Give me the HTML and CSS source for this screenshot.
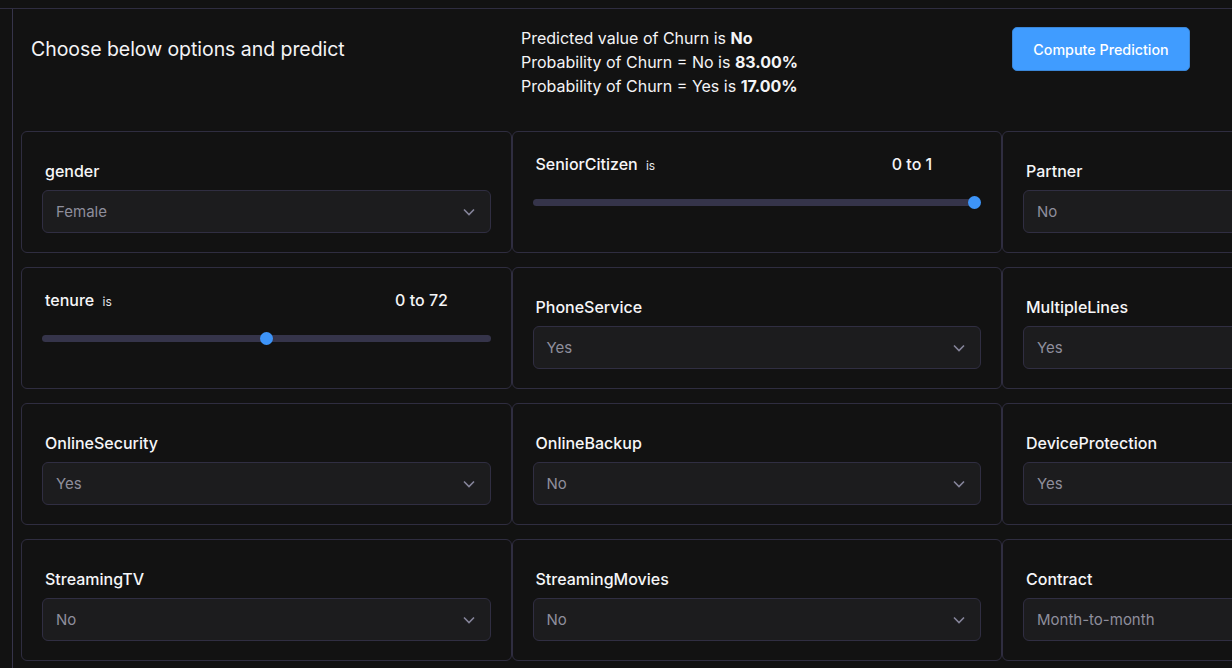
FILE: index.html
```html
<!DOCTYPE html>
<html lang="en">
<head>
<meta charset="UTF-8" />
<meta name="viewport" content="width=device-width, initial-scale=1" />
<title>Churn prediction</title>
<link rel="stylesheet" href="styles.css">
</head>
<body>

<div class="topbar"></div>

<div class="layout">
  <div class="rail"></div>
  <main class="main">

    <div class="header">
      <h2 class="title">Choose below options and predict</h2>
      <div class="prediction">
        <p>Predicted value of Churn is <strong>No</strong></p>
        <p>Probability of Churn = No is <strong>83.00%</strong></p>
        <p>Probability of Churn = Yes is <strong>17.00%</strong></p>
      </div>
      <div>
        <button class="btn">Compute Prediction</button>
      </div>
    </div>

    <div class="grid">
      <div class="card">
        <label class="field-label">gender</label>
        <div class="select"><span>Female</span><svg class="chev" viewBox="0 0 12 8"><path d="M1 1.5 6 6.5 11 1.5"/></svg></div>
      </div>
      <div class="card slider-card">
        <div class="slider-head">
          <span class="field-label">SeniorCitizen <small>is</small></span>
          <span class="range">0 to 1</span>
        </div>
        <div class="track track-short"><span class="thumb" style="left: 100%"></span></div>
      </div>
      <div class="card">
        <label class="field-label">Partner</label>
        <div class="select"><span>No</span><svg class="chev" viewBox="0 0 12 8"><path d="M1 1.5 6 6.5 11 1.5"/></svg></div>
      </div>

      <div class="card slider-card">
        <div class="slider-head">
          <span class="field-label">tenure <small>is</small></span>
          <span class="range">0 to 72</span>
        </div>
        <div class="track"><span class="thumb" style="left: 50%"></span></div>
      </div>
      <div class="card">
        <label class="field-label">PhoneService</label>
        <div class="select"><span>Yes</span><svg class="chev" viewBox="0 0 12 8"><path d="M1 1.5 6 6.5 11 1.5"/></svg></div>
      </div>
      <div class="card">
        <label class="field-label">MultipleLines</label>
        <div class="select"><span>Yes</span><svg class="chev" viewBox="0 0 12 8"><path d="M1 1.5 6 6.5 11 1.5"/></svg></div>
      </div>

      <div class="card">
        <label class="field-label">OnlineSecurity</label>
        <div class="select"><span>Yes</span><svg class="chev" viewBox="0 0 12 8"><path d="M1 1.5 6 6.5 11 1.5"/></svg></div>
      </div>
      <div class="card">
        <label class="field-label">OnlineBackup</label>
        <div class="select"><span>No</span><svg class="chev" viewBox="0 0 12 8"><path d="M1 1.5 6 6.5 11 1.5"/></svg></div>
      </div>
      <div class="card">
        <label class="field-label">DeviceProtection</label>
        <div class="select"><span>Yes</span><svg class="chev" viewBox="0 0 12 8"><path d="M1 1.5 6 6.5 11 1.5"/></svg></div>
      </div>

      <div class="card">
        <label class="field-label">StreamingTV</label>
        <div class="select"><span>No</span><svg class="chev" viewBox="0 0 12 8"><path d="M1 1.5 6 6.5 11 1.5"/></svg></div>
      </div>
      <div class="card">
        <label class="field-label">StreamingMovies</label>
        <div class="select"><span>No</span><svg class="chev" viewBox="0 0 12 8"><path d="M1 1.5 6 6.5 11 1.5"/></svg></div>
      </div>
      <div class="card">
        <label class="field-label">Contract</label>
        <div class="select"><span>Month-to-month</span><svg class="chev" viewBox="0 0 12 8"><path d="M1 1.5 6 6.5 11 1.5"/></svg></div>
      </div>
    </div>

  </main>
</div>

</body>
</html>
```

FILE: styles.css
```css
html, body {
  margin: 0;
  background: #121212;
  color: #f4f4f6;
  font-family: Inter, "Noto Sans", sans-serif;
  overflow: hidden;
}
.topbar {
  height: 8px;
  border-bottom: 1px solid #2f2d40;
}
.layout {
  display: flex;
  min-height: 700px;
}
.rail {
  width: 12px;
  flex: none;
}
.main {
  border-left: 1px solid #36344a;
  padding-left: 8px;
  flex: 1;
}
.header {
  display: grid;
  grid-template-columns: 490px 491px 300px;
  height: 122px;
  box-sizing: border-box;
  padding-top: 17px;
}
.header > * {
  padding-left: 10px;
}
.title {
  margin: 9px 0 0;
  font-size: 19.5px;
  font-weight: 400;
  line-height: 28px;
  letter-spacing: -0.05px;
}
.prediction p {
  margin: 0;
  font-size: 16px;
  line-height: 24px;
}
.prediction strong {
  font-weight: 700;
}
.btn {
  margin-top: 1px;
  width: 178px;
  height: 44px;
  background: #409cff;
  border: 1px solid #3a86d8;
  border-radius: 5px;
  color: #fff;
  font-family: Inter, sans-serif;
  font-size: 14.3px;
  font-weight: 500;
  cursor: pointer;
}
.grid {
  display: grid;
  grid-template-columns: repeat(3, 490.5px);
  row-gap: 14px;
}
.card {
  height: 122px;
  box-sizing: border-box;
  border: 1px solid #2f2d40;
  border-radius: 6px;
  padding: 27px 20px 0;
}
.field-label {
  display: block;
  padding-left: 3px;
  font-size: 16px;
  font-weight: 500;
  line-height: 24px;
  margin-bottom: 7px;
  color: #f6f6f8;
}
.field-label small {
  font-size: 12px;
  font-weight: 400;
  margin-left: 4px;
  color: #e6e6ea;
}
.select {
  display: flex;
  align-items: center;
  justify-content: space-between;
  height: 43px;
  box-sizing: border-box;
  background: #1c1c1e;
  border: 1px solid #302e42;
  border-radius: 6px;
  padding: 0 15px 0 13px;
  color: #8e8e9c;
  font-size: 15px;
}
.chev {
  width: 12px;
  height: 8px;
  fill: none;
  stroke: #85849a;
  stroke-width: 1.6;
}
.slider-card {
  padding-top: 20px;
}
.slider-head {
  display: flex;
  justify-content: space-between;
  padding-right: 19px;
}
.slider-head .field-label {
  margin: 0;
}
.range {
  width: 100px;
  text-align: center;
  font-size: 16px;
  font-weight: 500;
  line-height: 24px;
}
.track {
  position: relative;
  height: 7px;
  margin: 21px 0 0;
  background: #35344a;
  border-radius: 4px;
}
.track-short {
  margin-right: 6px;
}
.thumb {
  position: absolute;
  top: -3px;
  width: 13px;
  height: 13px;
  margin-left: -6px;
  border-radius: 50%;
  background: #3d94f8;
}
.track-short .thumb {
  margin-left: -7px;
}
```
